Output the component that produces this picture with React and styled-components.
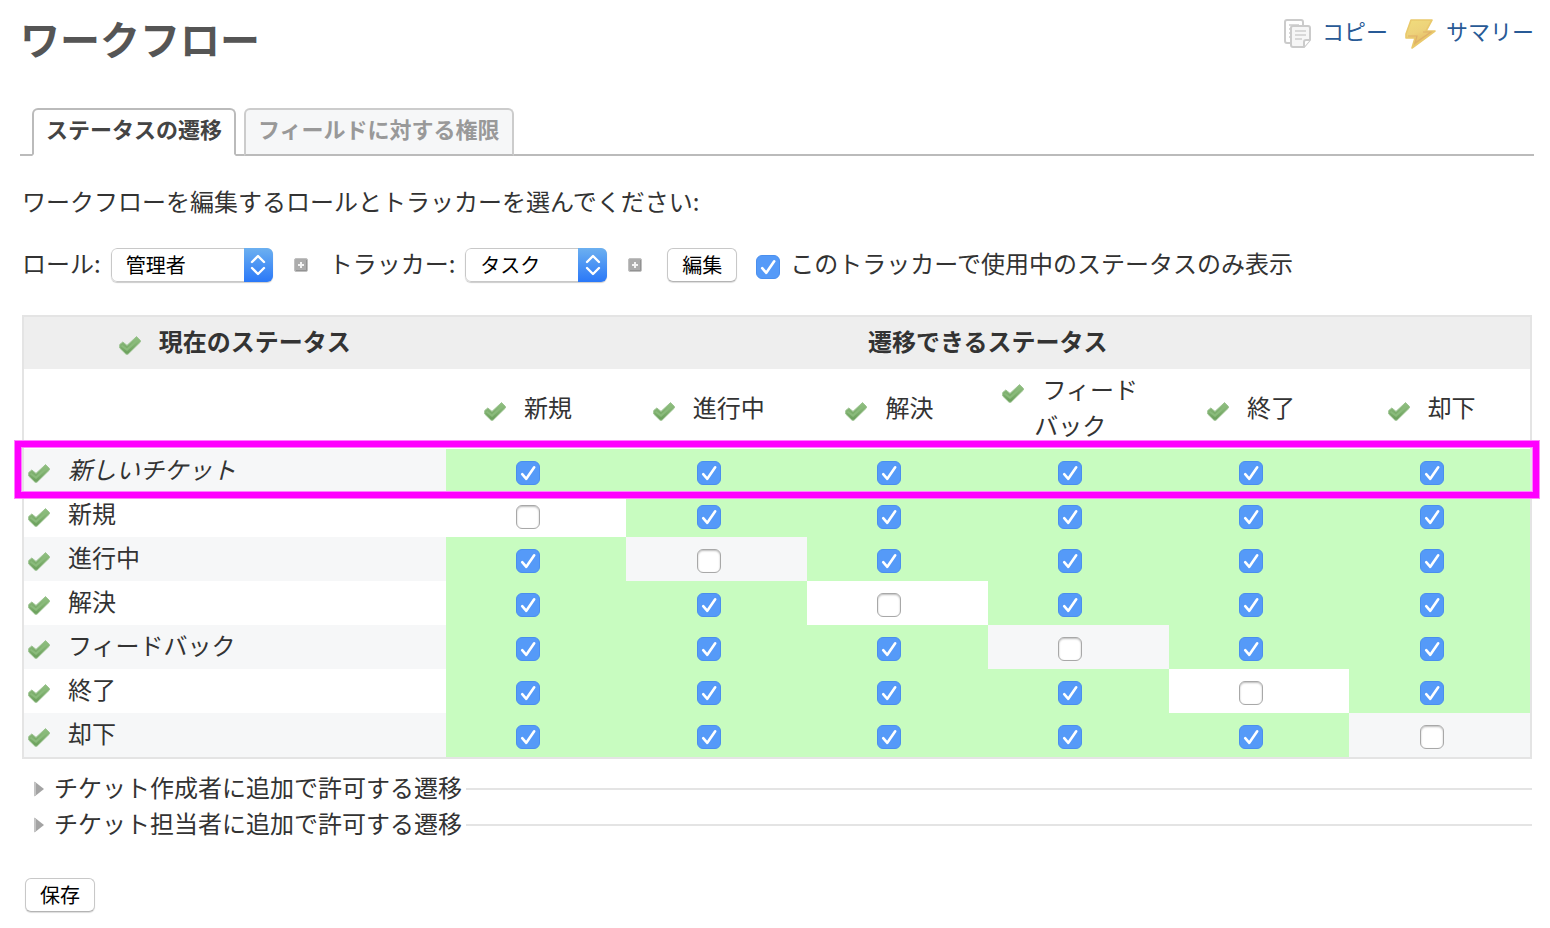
import { useState } from 'react';
import styled, { createGlobalStyle } from 'styled-components';

const STATUSES = ['新規', '進行中', '解決', 'フィードバック', '終了', '却下'];
const ROWS = ['新しいチケット', ...STATUSES];

// a status never moves to itself, everything else is allowed
const initialTransitions = ROWS.map((row) => STATUSES.map((status) => row !== status));

const TickIcon = () => (
	<svg width="22" height="20" viewBox="0 0 22 20" aria-hidden="true">
		<defs>
			<linearGradient id="tick" x1="0" y1="0" x2="0" y2="1">
				<stop offset="0" stopColor="#93c183" />
				<stop offset="1" stopColor="#6a9f5b" />
			</linearGradient>
		</defs>
		<path
			d="M.7 8.6 3.8 6 8 9.4 17.5.6 21.4 4.4V6L9 18.2H7L.7 12Z"
			fill="url(#tick)"
			stroke="#9cc391"
			strokeWidth="1"
			strokeLinejoin="round"
		/>
		<path d="M2.5 9.5 8 13.6 19 3.8" fill="none" stroke="#8abb7b" strokeWidth="2" />
	</svg>
);

const CopyIcon = () => (
	<svg width="28" height="30" viewBox="0 0 28 30" fill="none" stroke="#cbcbcb" strokeWidth="2" aria-hidden="true">
		<path d="M8 25H3Q1 25 1 23V4Q1 2 3 2H17Q19 2 19 4V7" />
		<path d="M5 7H15M5 11H7M5 15H7M5 19H7" stroke="#d8d8d8" />
		<path d="M9 8H24Q26 8 26 10V22L20 29H9Q7 29 7 27V10Q7 8 9 8Z" fill="#f6f6f6" />
		<path d="M11 13H22M11 17H22M11 21H18" stroke="#d8d8d8" />
		<path d="M26 22H22Q20 22 20 24V29" fill="#fff" />
	</svg>
);

const BoltIcon = () => (
	<svg width="32" height="32" viewBox="0 0 32 32" aria-hidden="true">
		<defs>
			<linearGradient id="bolt" x1="0" y1="0" x2="0.4" y2="1">
				<stop offset="0" stopColor="#f0dc7c" />
				<stop offset="0.5" stopColor="#edd27a" />
				<stop offset="1" stopColor="#e2b45c" />
			</linearGradient>
		</defs>
		<path
			d="M7 2H28L22 13H31L8 30 11 20H2V16Z"
			fill="url(#bolt)"
			stroke="#e9c96c"
			strokeWidth="1.6"
			strokeLinejoin="round"
		/>
		<path d="M4 18H13L11 25 27 14H19" fill="none" stroke="#dfb068" strokeWidth="1.2" />
	</svg>
);

const PlusIcon = () => (
	<svg width="14" height="14" viewBox="0 0 14 14" aria-hidden="true">
		<rect x="0.5" y="0.5" width="13" height="13" rx="1.5" fill="#acacac" stroke="#c0c0c0" />
		<path d="M2 12.5H12.5V2" fill="none" stroke="#929292" />
		<path d="M7 4V10M4 7H10" stroke="#f4f4f4" strokeWidth="2" />
	</svg>
);

const Checkbox = (props) => (
	<CheckWrap>
		<CheckInput type="checkbox" {...props} />
		<CheckMark viewBox="0 0 24 24" aria-hidden="true">
			<path d="M6.2 13.2 10.3 17.8 18.2 6.3" />
		</CheckMark>
	</CheckWrap>
);

const SelectBox = ({ id, width, options }) => (
	<SelectWrap $width={width}>
		<Select id={id}>
			{options.map((option) => (
				<option key={option}>{option}</option>
			))}
		</Select>
		<Arrows>
			<svg width="16" height="22" viewBox="0 0 16 22" aria-hidden="true">
				<path d="M2 8 8 2 14 8M2 14 8 20 14 14" />
			</svg>
		</Arrows>
	</SelectWrap>
);

const StatusLabel = ({ name }) => (
	<>
		<IconButton type="button" aria-label={`${name}: すべて選択`}>
			<TickIcon />
		</IconButton>
		{name}
	</>
);

export default function App() {
	const [transitions, setTransitions] = useState(initialTransitions);
	const [usedOnly, setUsedOnly] = useState(true);

	const toggle = (r, c) =>
		setTransitions(transitions.map((row, i) => (i === r ? row.map((v, j) => (j === c ? !v : v)) : row)));

	return (
		<Page>
			<GlobalStyle />
			<Header>
				<Title>ワークフロー</Title>
				<Contextual>
					<ContextLink href="#copy">
						<CopyIcon />
						コピー
					</ContextLink>
					<ContextLink href="#summary">
						<BoltIcon />
						サマリー
					</ContextLink>
				</Contextual>
			</Header>
			<Tabs>
				<Tab href="#status" $selected>
					ステータスの遷移
				</Tab>
				<Tab href="#fields">フィールドに対する権限</Tab>
			</Tabs>
			<Content>
				<Lead>ワークフローを編集するロールとトラッカーを選んでください:</Lead>
				<Filters>
					<Field>
						<Label htmlFor="role">ロール:</Label>
						<SelectBox id="role" width={162} options={['管理者', '開発者', '報告者']} />
					</Field>
					<PlainButton type="button" aria-label="ロールを複数選択">
						<PlusIcon />
					</PlainButton>
					<Field>
						<Label htmlFor="tracker">トラッカー:</Label>
						<SelectBox id="tracker" width={142} options={['タスク', 'バグ', '機能']} />
					</Field>
					<PlainButton type="button" aria-label="トラッカーを複数選択">
						<PlusIcon />
					</PlainButton>
					<FilterActions>
						<Button type="button">編集</Button>
						<Field>
							<Checkbox id="used" checked={usedOnly} onChange={() => setUsedOnly(!usedOnly)} />
							<Label htmlFor="used">このトラッカーで使用中のステータスのみ表示</Label>
						</Field>
					</FilterActions>
				</Filters>
				<Table>
					<colgroup>
						<FirstCol />
						<col span={STATUSES.length} />
					</colgroup>
					<thead>
						<tr>
							<HeadCell scope="col">
								<StatusLabel name="現在のステータス" />
							</HeadCell>
							<HeadCell scope="colgroup" colSpan={STATUSES.length}>
								遷移できるステータス
							</HeadCell>
						</tr>
						<tr>
							<td />
							{STATUSES.map((status) => (
								<ColumnCell key={status} scope="col">
									<StatusLabel name={status} />
								</ColumnCell>
							))}
						</tr>
					</thead>
					<tbody>
						{ROWS.map((row, r) => (
							<Row key={row}>
								<RowCell scope="row" $italic={r === 0}>
									<StatusLabel name={row} />
									{r === 0 && <Highlight />}
								</RowCell>
								{STATUSES.map((status, c) => (
									<CheckCell key={status} $enabled={transitions[r][c]}>
										<Checkbox
											aria-label={`${row} → ${status}`}
											checked={transitions[r][c]}
											onChange={() => toggle(r, c)}
										/>
									</CheckCell>
								))}
							</Row>
						))}
					</tbody>
				</Table>
				{['チケット作成者に追加で許可する遷移', 'チケット担当者に追加で許可する遷移'].map((legend) => (
					<Fieldset key={legend}>
						<legend>
							<LegendButton type="button" aria-expanded="false">
								<svg width="10" height="16" viewBox="0 0 10 16" aria-hidden="true">
									<path d="M.5.5 10 8 .5 15.5Z" fill="#a3a3a3" />
									<path d="M1 1V15" stroke="#c4c4c4" strokeWidth="2" />
								</svg>
								<LegendText>{legend}</LegendText>
							</LegendButton>
						</legend>
					</Fieldset>
				))}
				<Submit>
					<Button type="submit">保存</Button>
				</Submit>
			</Content>
		</Page>
	);
}

const GlobalStyle = createGlobalStyle`
	* {
		box-sizing: border-box;
	}
	body {
		margin: 0;
		background: #fff;
		color: #333;
		font-family: 'Noto Sans CJK JP', sans-serif;
		font-size: 24px;
		line-height: 36px;
	}
	svg {
		display: block;
	}
`;
const Page = styled.main`
	padding: 14px 16px 16px 20px;
`;
const Header = styled.header`
	display: flex;
	justify-content: space-between;
	align-items: flex-start;
	margin-bottom: 46px;
`;
const Title = styled.h1`
	margin: 0;
	color: #555;
	font-size: 40px;
	line-height: 48px;
`;
const Contextual = styled.div`
	display: flex;
	gap: 16px;
`;
const ContextLink = styled.a`
	display: flex;
	align-items: flex-start;
	gap: 10px;
	color: #285a96;
	font-size: 22px;
	line-height: 32px;
	text-decoration: none;
	svg {
		margin-top: 4px;
	}
`;
const Tabs = styled.nav`
	display: flex;
	gap: 8px;
	padding-left: 12px;
	box-shadow: inset 0 -2px #bbb;
`;
const Tab = styled.a`
	height: 48px;
	padding: 0 12px;
	border: 2px solid ${(props) => (props.$selected ? '#bbb' : '#ccc')};
	border-bottom-color: ${(props) => (props.$selected ? '#fff' : '#bbb')};
	border-radius: 6px 6px 0 0;
	background: ${(props) => (props.$selected ? '#fff' : '#f6f7f8')};
	color: ${(props) => (props.$selected ? '#444' : '#999')};
	font-size: 22px;
	font-weight: bold;
	line-height: 36px;
	text-decoration: none;
`;
const Content = styled.form`
	padding: 27px 2px 0;
`;
const Lead = styled.p`
	margin: 0 0 28px;
`;
const Filters = styled.div`
	display: flex;
	flex-wrap: wrap;
	align-items: center;
	gap: 21px;
	margin-bottom: 32px;
`;
const Field = styled.div`
	display: flex;
	align-items: center;
	gap: 10px;
`;
const Label = styled.label`
	padding-bottom: 4px;
	line-height: 32px;
`;
const SelectWrap = styled.span`
	position: relative;
	display: block;
	width: ${(props) => props.$width}px;
	height: 34px;
	border-radius: 6px;
	overflow: hidden;
	box-shadow: 0 1px 1px #ccc;
`;
const Select = styled.select`
	appearance: none;
	display: block;
	width: 100%;
	height: 34px;
	padding: 0 36px 2px 14px;
	border: 1px solid #c8c8c8;
	border-radius: 6px;
	background: #fff;
	color: #000;
	font-family: inherit;
	font-size: 20px;
`;
const Arrows = styled.span`
	position: absolute;
	top: 0;
	right: 0;
	display: flex;
	align-items: center;
	justify-content: center;
	width: 29px;
	height: 100%;
	background: linear-gradient(#6cb0f0, #2a78f8);
	pointer-events: none;
	path {
		fill: none;
		stroke: #fff;
		stroke-width: 2.4;
		stroke-linecap: round;
		stroke-linejoin: round;
	}
`;
const Button = styled.button`
	height: 34px;
	padding: 0 14px;
	border: 1px solid #c8c8c8;
	border-bottom-color: #b4b4b4;
	border-radius: 6px;
	background: #fff;
	box-shadow: 0 1px 1px #ddd;
	color: #000;
	font-family: inherit;
	font-size: 20px;
	line-height: 30px;
`;
const PlainButton = styled.button`
	padding: 0;
	border: 0;
	background: none;
`;
const IconButton = styled(PlainButton)`
	margin-right: 18px;
	vertical-align: -5px;
`;
const CheckWrap = styled.span`
	position: relative;
	display: block;
	width: 24px;
	height: 24px;
`;
const FilterActions = styled.div`
	display: flex;
	align-items: center;
	gap: 19px;
	padding-left: 4px;
	${CheckWrap} {
		margin-top: 4px;
	}
`;
const CheckInput = styled.input`
	appearance: none;
	display: block;
	width: 24px;
	height: 24px;
	margin: 0;
	border: 1px solid #a8a8a8;
	border-radius: 6px;
	background: #fff;
	box-shadow: inset 0 1px 2px #bbb;
	&:checked {
		border-color: #4a8fee;
		background: #559af8;
		box-shadow: none;
	}
`;
const CheckMark = styled.svg`
	position: absolute;
	inset: 0;
	pointer-events: none;
	fill: none;
	stroke: #fff;
	stroke-width: 2.6;
	stroke-linecap: round;
	stroke-linejoin: round;
	input:not(:checked) + & {
		display: none;
	}
`;
const Table = styled.table`
	width: 100%;
	table-layout: fixed;
	border: 2px solid #e4e4e4;
	border-spacing: 0;
	th,
	td {
		padding: 0;
	}
	th {
		padding-bottom: 4px;
	}
`;
const FirstCol = styled.col`
	width: 28%;
`;
const HeadCell = styled.th`
	height: 52px;
	background: #eee;
`;
const ColumnCell = styled.th`
	height: 80px;
	${Table} & {
		padding: 0 20px 4px 4px;
	}
	font-weight: normal;
	line-break: strict;
`;
const Row = styled.tr`
	position: relative;
	height: 44px;
	&:nth-child(odd) {
		background: #f6f7f8;
	}
`;
const RowCell = styled.th`
	&& {
		padding-left: 4px;
	}
	font-weight: normal;
	font-style: ${(props) => (props.$italic ? 'italic' : 'normal')};
	text-align: left;
`;
// frame drawn over the whole row, a little outside the table
const Highlight = styled.span`
	position: absolute;
	inset: -8px -9px -5px;
	z-index: 1;
	border: 6px solid #f0f;
	box-shadow: 0 0 0 1px #ff80ff, inset 0 0 0 1px #ff80ff;
	pointer-events: none;
`;
const CheckCell = styled.td`
	background: ${(props) => (props.$enabled ? '#c8fcc0' : 'transparent')};
	${Table} & {
		padding: 4px 16px 0 0;
	}
	${CheckWrap} {
		margin: 0 auto;
	}
`;
const Fieldset = styled.fieldset`
	margin: 0;
	padding: 0;
	border: 0;
	border-top: 2px solid #e4e4e4;
	${Table} + & {
		margin-top: 12px;
	}
	legend {
		padding: 0 4px 0 12px;
	}
`;
const LegendButton = styled.button`
	display: flex;
	align-items: center;
	gap: 10px;
	padding: 0;
	border: 0;
	background: none;
	color: inherit;
	font: inherit;
`;
const LegendText = styled.span`
	padding-bottom: 4px;
	line-height: 32px;
`;
const Submit = styled.div`
	display: flex;
	margin-top: 35px;
	padding-left: 3px;
`;
